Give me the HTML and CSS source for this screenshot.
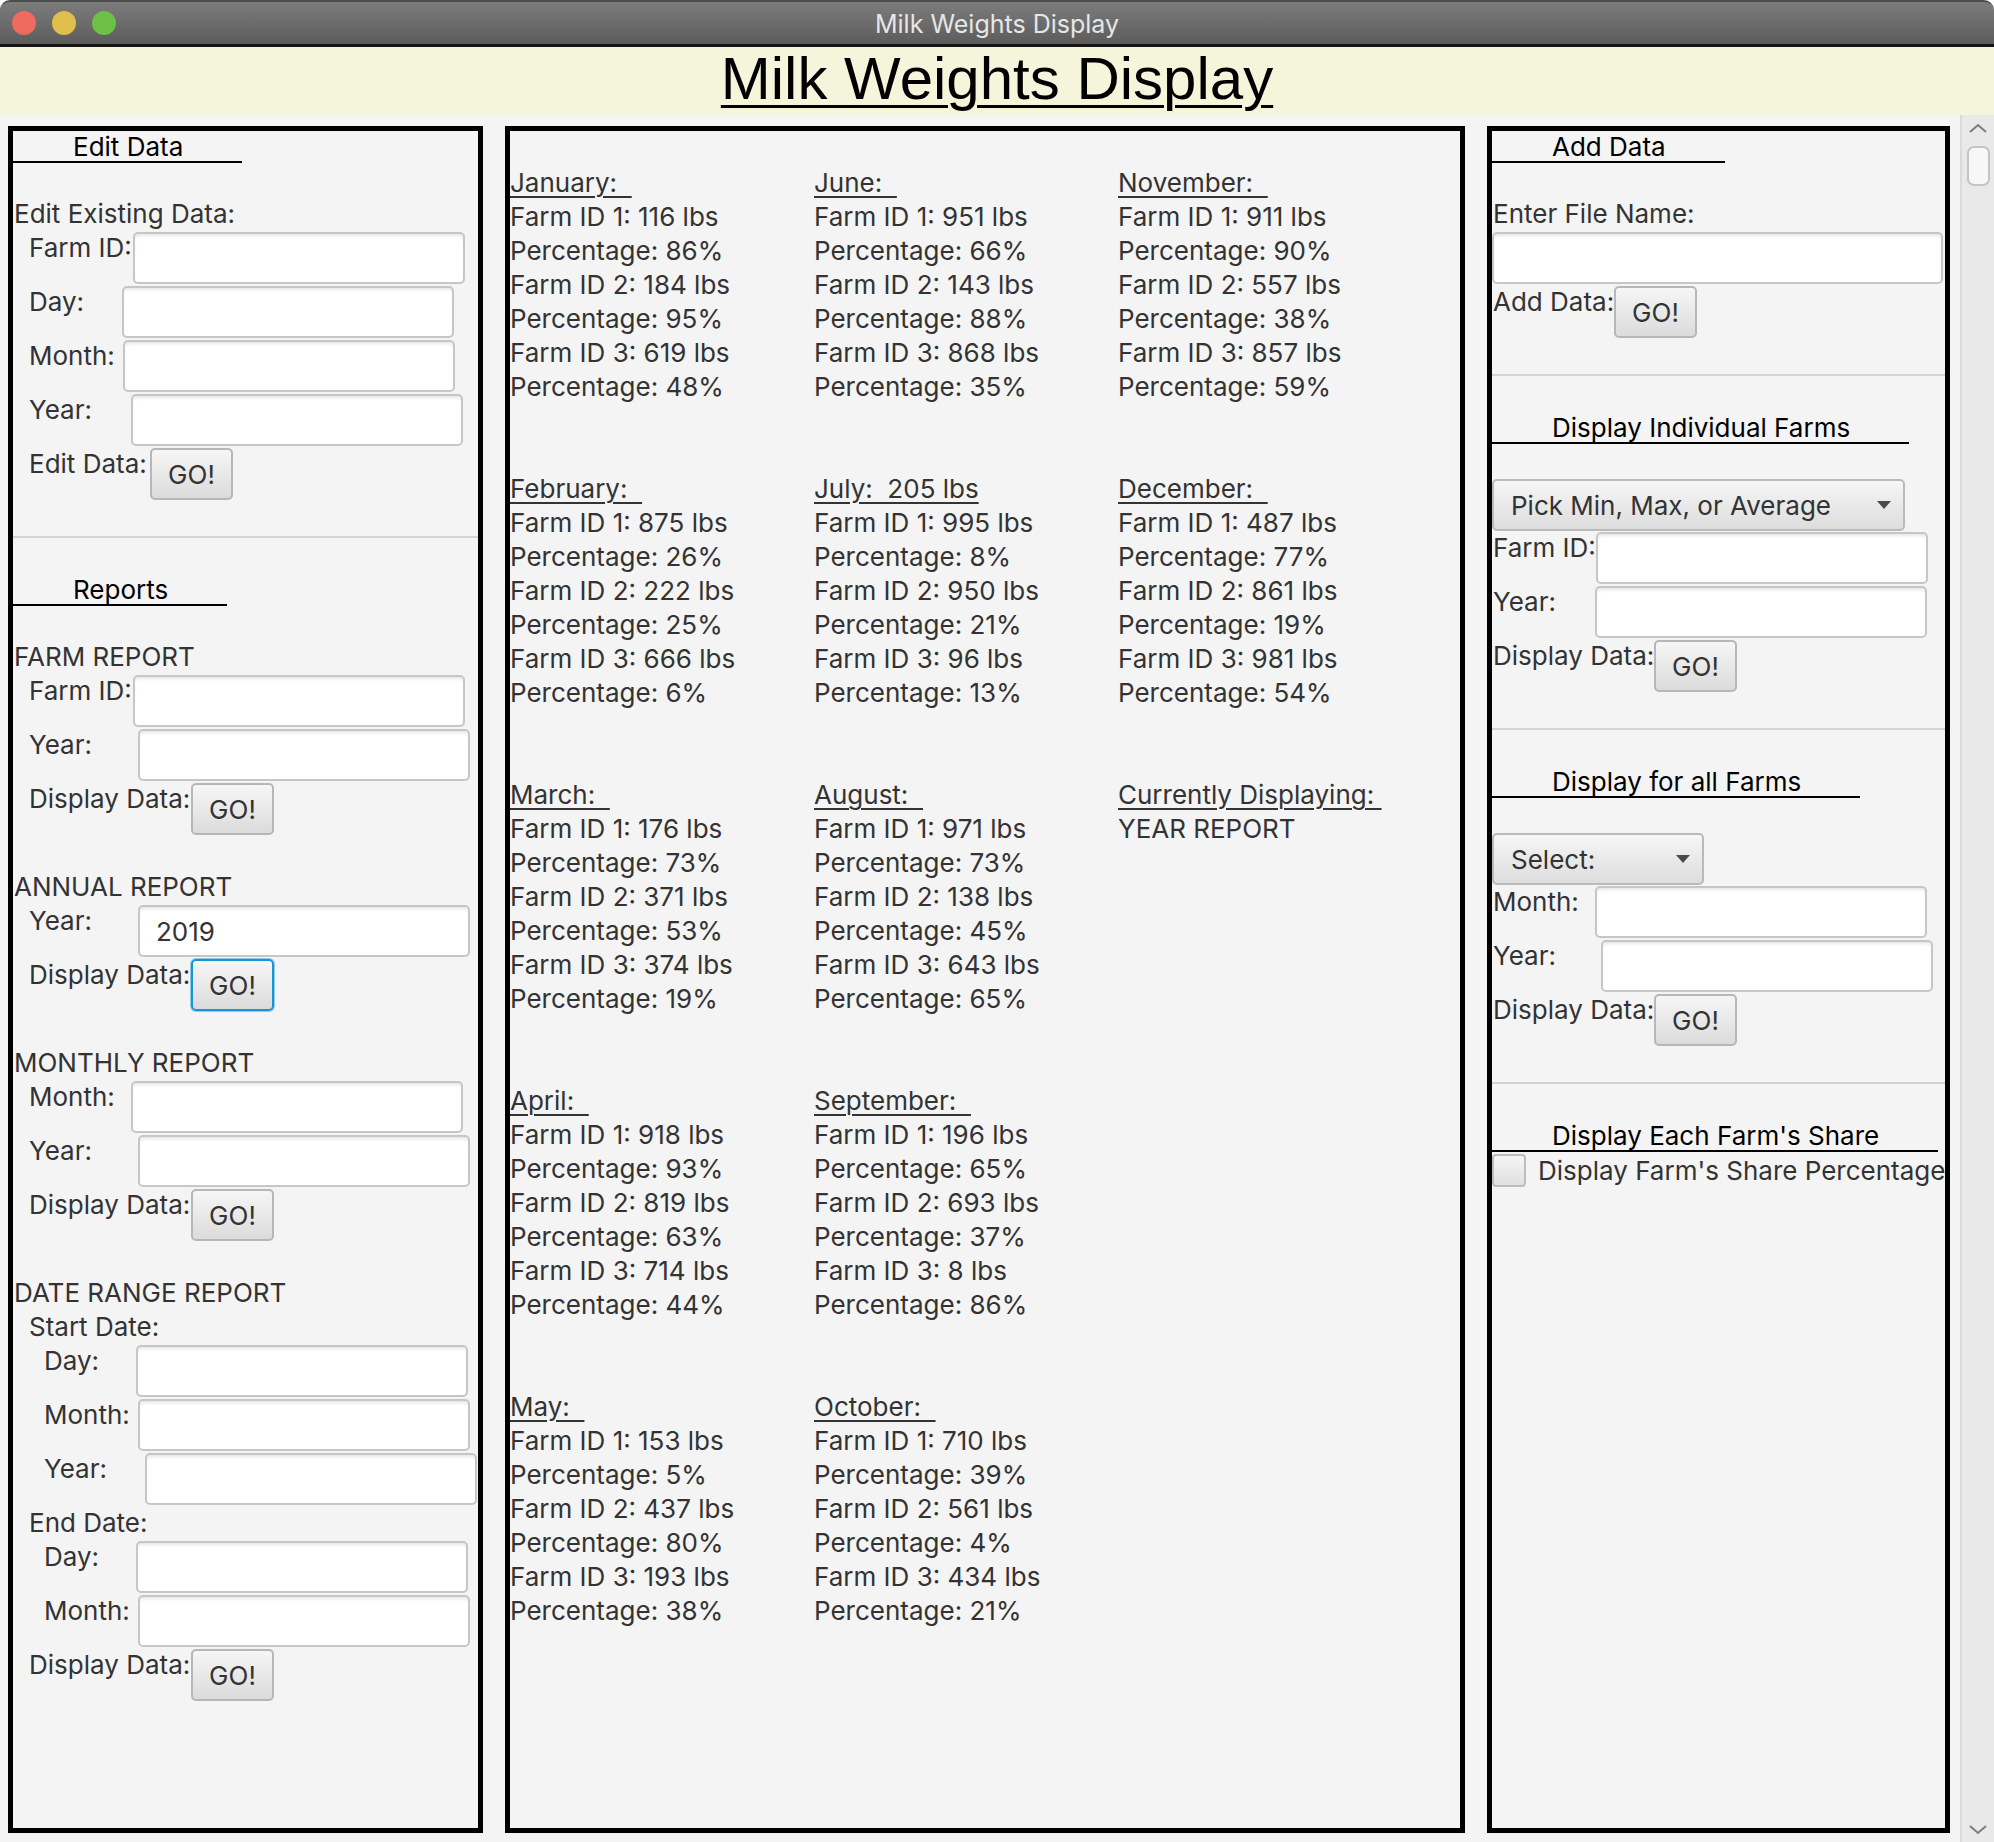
FILE: index.html
```html
<!DOCTYPE html>
<html lang="en">
<head>
<meta charset="utf-8">
<title>Milk Weights Display</title>
<link rel="stylesheet" href="styles.css">
</head>
<body>
<div class="window">
  <div class="titlebar">
    <div class="lights"><span class="light red"></span><span class="light yellow"></span><span class="light green"></span></div>
    <div class="wtitle">Milk Weights Display</div>
    <div></div>
  </div>
  <div class="banner"><h1 class="apptitle">Milk Weights Display</h1></div>
  <div class="body">
    <div class="main">
      <section class="panel side left">
        <div class="sec-head">Edit Data</div>
        <div class="line mt34">Edit Existing Data:</div>
        <div class="row ind"><span class="lbl w105">Farm ID:</span><input class="field" type="text"></div>
        <div class="row ind"><span class="lbl w94">Day:</span><input class="field" type="text"></div>
        <div class="row ind"><span class="lbl w95">Month:</span><input class="field" type="text"></div>
        <div class="row ind"><span class="lbl w103">Year:</span><input class="field" type="text"></div>
        <div class="row ind"><span class="lbl w122">Edit Data:</span><button class="go">GO!</button></div>
        <hr class="sep">
        <div class="sec-head">Reports</div>
        <div class="line mt34">FARM REPORT</div>
        <div class="row ind"><span class="lbl w105">Farm ID:</span><input class="field" type="text"></div>
        <div class="row ind"><span class="lbl w110">Year:</span><input class="field" type="text"></div>
        <div class="row ind"><span class="lbl w163">Display Data:</span><button class="go">GO!</button></div>
        <div class="line mt34">ANNUAL REPORT</div>
        <div class="row ind"><span class="lbl w110">Year:</span><input class="field" type="text" value="2019"></div>
        <div class="row ind"><span class="lbl w163">Display Data:</span><button class="go focus">GO!</button></div>
        <div class="line mt34">MONTHLY REPORT</div>
        <div class="row ind"><span class="lbl w103">Month:</span><input class="field" type="text"></div>
        <div class="row ind"><span class="lbl w110">Year:</span><input class="field" type="text"></div>
        <div class="row ind"><span class="lbl w163">Display Data:</span><button class="go">GO!</button></div>
        <div class="line mt34">DATE RANGE REPORT</div>
        <div class="line ind">Start Date:</div>
        <div class="row ind2"><span class="lbl w93">Day:</span><input class="field" type="text"></div>
        <div class="row ind2"><span class="lbl w95">Month:</span><input class="field" type="text"></div>
        <div class="row ind2"><span class="lbl w102">Year:</span><input class="field" type="text"></div>
        <div class="line ind">End Date:</div>
        <div class="row ind2"><span class="lbl w93">Day:</span><input class="field" type="text"></div>
        <div class="row ind2"><span class="lbl w95">Month:</span><input class="field" type="text"></div>
        <div class="row ind"><span class="lbl w163">Display Data:</span><button class="go">GO!</button></div>
      </section>

      <section class="panel center">
        <div class="months">
          <div class="month"><div class="l"><span class="h">January:  </span></div><div class="l">Farm ID 1: 116 lbs</div><div class="l">Percentage: 86%</div><div class="l">Farm ID 2: 184 lbs</div><div class="l">Percentage: 95%</div><div class="l">Farm ID 3: 619 lbs</div><div class="l">Percentage: 48%</div></div>
          <div class="month"><div class="l"><span class="h">February:  </span></div><div class="l">Farm ID 1: 875 lbs</div><div class="l">Percentage: 26%</div><div class="l">Farm ID 2: 222 lbs</div><div class="l">Percentage: 25%</div><div class="l">Farm ID 3: 666 lbs</div><div class="l">Percentage: 6%</div></div>
          <div class="month"><div class="l"><span class="h">March:  </span></div><div class="l">Farm ID 1: 176 lbs</div><div class="l">Percentage: 73%</div><div class="l">Farm ID 2: 371 lbs</div><div class="l">Percentage: 53%</div><div class="l">Farm ID 3: 374 lbs</div><div class="l">Percentage: 19%</div></div>
          <div class="month"><div class="l"><span class="h">April:  </span></div><div class="l">Farm ID 1: 918 lbs</div><div class="l">Percentage: 93%</div><div class="l">Farm ID 2: 819 lbs</div><div class="l">Percentage: 63%</div><div class="l">Farm ID 3: 714 lbs</div><div class="l">Percentage: 44%</div></div>
          <div class="month"><div class="l"><span class="h">May:  </span></div><div class="l">Farm ID 1: 153 lbs</div><div class="l">Percentage: 5%</div><div class="l">Farm ID 2: 437 lbs</div><div class="l">Percentage: 80%</div><div class="l">Farm ID 3: 193 lbs</div><div class="l">Percentage: 38%</div></div>
          <div class="month"><div class="l"><span class="h">June:  </span></div><div class="l">Farm ID 1: 951 lbs</div><div class="l">Percentage: 66%</div><div class="l">Farm ID 2: 143 lbs</div><div class="l">Percentage: 88%</div><div class="l">Farm ID 3: 868 lbs</div><div class="l">Percentage: 35%</div></div>
          <div class="month"><div class="l"><span class="h">July:  205 lbs</span></div><div class="l">Farm ID 1: 995 lbs</div><div class="l">Percentage: 8%</div><div class="l">Farm ID 2: 950 lbs</div><div class="l">Percentage: 21%</div><div class="l">Farm ID 3: 96 lbs</div><div class="l">Percentage: 13%</div></div>
          <div class="month"><div class="l"><span class="h">August:  </span></div><div class="l">Farm ID 1: 971 lbs</div><div class="l">Percentage: 73%</div><div class="l">Farm ID 2: 138 lbs</div><div class="l">Percentage: 45%</div><div class="l">Farm ID 3: 643 lbs</div><div class="l">Percentage: 65%</div></div>
          <div class="month"><div class="l"><span class="h">September:  </span></div><div class="l">Farm ID 1: 196 lbs</div><div class="l">Percentage: 65%</div><div class="l">Farm ID 2: 693 lbs</div><div class="l">Percentage: 37%</div><div class="l">Farm ID 3: 8 lbs</div><div class="l">Percentage: 86%</div></div>
          <div class="month"><div class="l"><span class="h">October:  </span></div><div class="l">Farm ID 1: 710 lbs</div><div class="l">Percentage: 39%</div><div class="l">Farm ID 2: 561 lbs</div><div class="l">Percentage: 4%</div><div class="l">Farm ID 3: 434 lbs</div><div class="l">Percentage: 21%</div></div>
          <div class="month"><div class="l"><span class="h">November:  </span></div><div class="l">Farm ID 1: 911 lbs</div><div class="l">Percentage: 90%</div><div class="l">Farm ID 2: 557 lbs</div><div class="l">Percentage: 38%</div><div class="l">Farm ID 3: 857 lbs</div><div class="l">Percentage: 59%</div></div>
          <div class="month"><div class="l"><span class="h">December:  </span></div><div class="l">Farm ID 1: 487 lbs</div><div class="l">Percentage: 77%</div><div class="l">Farm ID 2: 861 lbs</div><div class="l">Percentage: 19%</div><div class="l">Farm ID 3: 981 lbs</div><div class="l">Percentage: 54%</div></div>
          <div class="month"><div class="l"><span class="h">Currently Displaying: </span></div><div class="l">YEAR REPORT</div></div>
        </div>
      </section>

      <section class="panel side right">
        <div class="sec-head">Add Data</div>
        <div class="line mt34">Enter File Name:</div>
        <div class="row"><input class="field full" type="text"></div>
        <div class="row"><span class="lbl w122">Add Data:</span><button class="go">GO!</button></div>
        <hr class="sep">
        <div class="sec-head">Display Individual Farms</div>
        <div class="combo wide mt35"><span>Pick Min, Max, or Average</span><span class="caret"></span></div>
        <div class="row"><span class="lbl w104">Farm ID:</span><input class="field" type="text"></div>
        <div class="row"><span class="lbl w103">Year:</span><input class="field" type="text"></div>
        <div class="row"><span class="lbl w162">Display Data:</span><button class="go">GO!</button></div>
        <hr class="sep">
        <div class="sec-head">Display for all Farms</div>
        <div class="combo narrow mt35"><span>Select:</span><span class="caret"></span></div>
        <div class="row"><span class="lbl w103">Month:</span><input class="field" type="text"></div>
        <div class="row"><span class="lbl w109">Year:</span><input class="field" type="text"></div>
        <div class="row"><span class="lbl w162">Display Data:</span><button class="go">GO!</button></div>
        <hr class="sep">
        <div class="sec-head">Display Each Farm's Share</div>
        <label class="check-row"><span class="checkbox"></span><span>Display Farm's Share Percentage</span></label>
      </section>
    </div>
    <div class="scrollbar">
      <svg class="chev" width="20" height="11" viewBox="0 0 20 11"><polyline points="2,9 10,2 18,9" fill="none" stroke="#7d7d7d" stroke-width="2"/></svg>
      <div class="thumb"></div>
      <div class="spacer"></div>
      <svg class="chev" width="20" height="11" viewBox="0 0 20 11"><polyline points="2,2 10,9 18,2" fill="none" stroke="#7d7d7d" stroke-width="2"/></svg>
    </div>
  </div>
</div>
</body>
</html>
```
FILE: styles.css
```css
* { box-sizing: border-box; }
html, body { margin: 0; padding: 0; background: #ffffff; }
body {
  font-family: "Inter", "Open Sans", sans-serif;
  font-size: 26px;
  color: #333333;
}
.window {
  width: 1994px;
  height: 1842px;
  display: flex;
  flex-direction: column;
  overflow: hidden;
}
.titlebar {
  flex: none;
  height: 47px;
  border-top: 2px solid #4c4c4c;
  border-bottom: 3px solid #141414;
  border-radius: 10px 10px 0 0;
  background: linear-gradient(#7c7c7c, #5c5c5c);
  display: grid;
  grid-template-columns: 1fr auto 1fr;
  align-items: center;
}
.lights { display: flex; gap: 16px; padding-left: 12px; }
.light { width: 24px; height: 24px; border-radius: 50%; }
.red { background: #ec6a5e; }
.yellow { background: #e0bf4d; }
.green { background: #6dbf45; }
.wtitle { color: #e6e6e6; font-size: 25px; padding-top: 1px; }

.banner {
  flex: none;
  height: 68px;
  background: #f5f5dc;
  text-align: center;
}
.apptitle {
  margin: 0;
  font: 400 60px/64px "Liberation Sans", Arial, sans-serif;
  color: #000;
  text-decoration: underline;
  text-decoration-thickness: 3px;
  text-underline-offset: 6px;
}

.body {
  flex: 1;
  min-height: 0;
  display: flex;
  background: #f4f4f4;
}
.main {
  flex: 1;
  display: flex;
  gap: 22px;
  padding: 11px 10px 9px 8px;
}
.panel {
  border: 5px solid #000;
  display: flex;
  flex-direction: column;
  align-items: flex-start;
}
.left { width: 475px; }
.center { width: 960px; padding-top: 35px; }
.right { width: 463px; }

.sec-head {
  padding: 2px 59px 0 60px;
  line-height: 28px;
  border-bottom: 2px solid #000;
  color: #000;
  white-space: nowrap;
}
.line {
  height: 34px;
  line-height: 34px;
  padding-left: 1px;
  white-space: nowrap;
}
.row {
  display: flex;
  align-items: flex-start;
  padding: 1px 0;
}
.lbl {
  flex: none;
  line-height: 32px;
  padding-left: 1px;
  white-space: nowrap;
}
.ind { margin-left: 15px; }
.ind2 { margin-left: 30px; }
.mt34 { margin-top: 34px; }
.mt35 { margin-top: 35px; }

.w93 { width: 93px; }
.w94 { width: 94px; }
.w95 { width: 95px; }
.w102 { width: 102px; }
.w103 { width: 103px; }
.w104 { width: 104px; }
.w105 { width: 105px; }
.w109 { width: 109px; }
.w110 { width: 110px; }
.w122 { width: 122px; }
.w162 { width: 162px; }
.w163 { width: 163px; }

.sep {
  align-self: stretch;
  height: 2px;
  border: 0;
  background: #d3d3d3;
  margin: 35px 0 36px;
}

.field {
  width: 332px;
  height: 52px;
  border: 2px solid #c6c6c6;
  border-radius: 5px;
  background: #fff;
  box-shadow: inset 0 4px 4px -3px rgba(0, 0, 0, 0.14);
  font: inherit;
  color: #333;
  padding: 0 16px;
  outline: none;
}
.field.full { width: 451px; }

.go {
  flex: none;
  width: 83px;
  height: 52px;
  border: 2px solid #b7b7b7;
  border-radius: 5px;
  background: linear-gradient(#f6f6f6, #dbdbdb);
  font: inherit;
  color: #333;
  padding: 0;
}
.go.focus {
  border-color: #1896d3;
  box-shadow: 0 0 0 1px rgba(24, 150, 211, 0.45);
}

.combo {
  height: 52px;
  border: 2px solid #bababa;
  border-radius: 5px;
  background: linear-gradient(#f6f6f6, #dddddd);
  display: flex;
  align-items: center;
  justify-content: space-between;
  padding: 0 12px 0 17px;
  color: #333;
  white-space: nowrap;
}
.combo.wide { width: 413px; }
.combo.narrow { width: 212px; }
.caret {
  width: 0;
  height: 0;
  border-left: 7px solid transparent;
  border-right: 7px solid transparent;
  border-top: 8px solid #4a4a4a;
}

.check-row {
  display: flex;
  align-items: center;
  gap: 12px;
  margin-top: 2px;
  white-space: nowrap;
}
.checkbox {
  width: 34px;
  height: 33px;
  border: 2px solid #bdbdbd;
  border-radius: 4px;
  background: linear-gradient(#f5f5f5, #e0e0e0);
}

.months {
  display: grid;
  grid-template-columns: repeat(3, 304px);
  grid-template-rows: repeat(5, 306px);
  grid-auto-flow: column;
}
.month .l {
  height: 34px;
  line-height: 34px;
  white-space: pre;
}
.month .h {
  text-decoration: underline;
  text-decoration-thickness: 2px;
  text-underline-offset: 4px;
}

.scrollbar {
  flex: none;
  width: 34px;
  background: #e9e9e9;
  border-left: 2px solid #dadada;
  display: flex;
  flex-direction: column;
  align-items: center;
  padding: 8px 0 7px;
}
.thumb {
  width: 23px;
  height: 40px;
  margin-top: 12px;
  border: 2px solid #c4c4c4;
  border-radius: 7px;
  background: #f7f7f7;
}
.spacer { flex: 1; }
```
